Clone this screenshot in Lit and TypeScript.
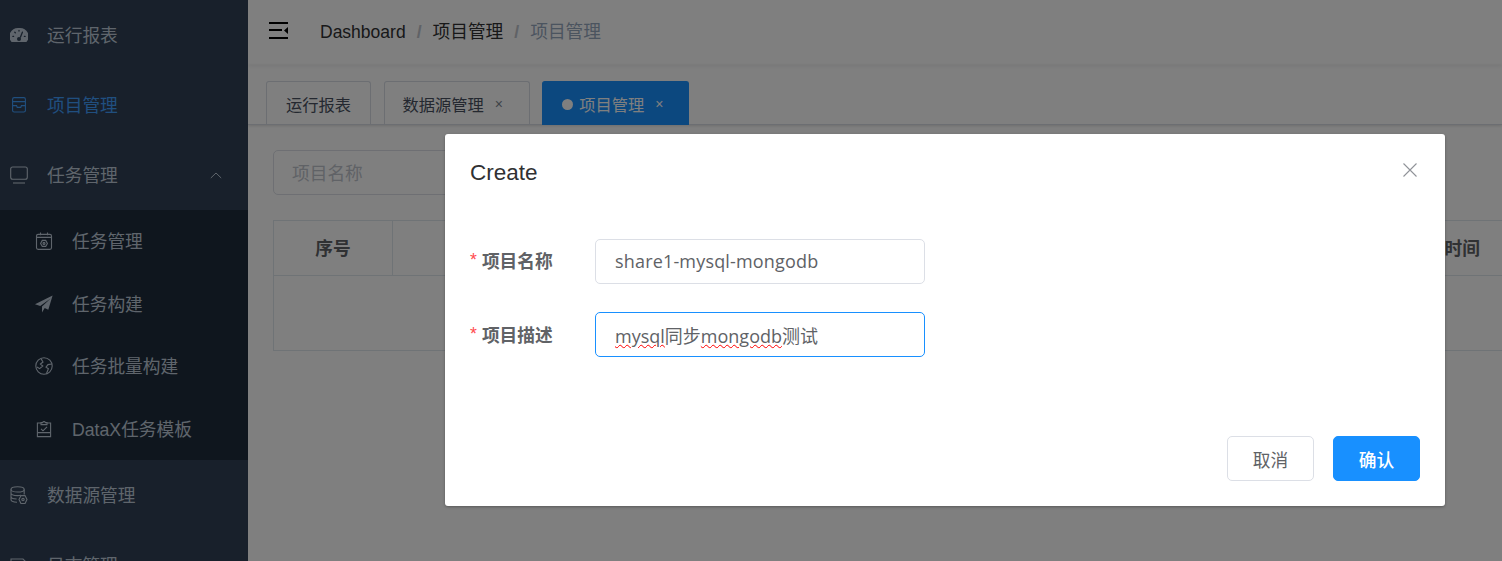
import { LitElement, html, css, svg } from "lit";
import { customElement } from "lit/decorators.js";

const icons: Record<string, unknown> = {
  gauge: svg`<path fill="currentColor" stroke="none" d="M1.600 16 A9 8.400 0 0 1 9 2 A9 8.400 0 0 1 16.400 16 Z"/><g stroke="#304156" stroke-width="1.300" stroke-linecap="round"><path d="M9 4.400v.6M4.800 6.200l.5.5M2.900 10.400h.7M14.400 10.400h.7M12.400 6.200l-2 5"/></g><circle cx="9" cy="13" r="2" fill="#304156" stroke="none"/>`,
  inbox: svg`<rect x="2.600" y="1.600" width="12.800" height="14.400" rx="1.600"/><path d="M2.600 5.600h12.800M2.600 9.600h4l.6 1.800h3.600l.6-1.800h4"/>`,
  monitor: svg`<rect x=".7" y="1" width="16.600" height="12.200" rx="2"/><path d="M3 17h12"/>`,
  calendar: svg`<rect x="1.500" y="2.400" width="15" height="15" rx="1.600"/><path d="M1.500 5.400h15M5.500 .5v2.800M12.500 .5v2.800"/><circle cx="9" cy="11.400" r="1"/><path d="M7.300 8.400h3.400l1.700 3-1.700 3H7.300l-1.700-3z"/>`,
  plane: svg`<path fill="currentColor" stroke="none" d="M17.600 .6 0 9.200l5.200 1.700L15.600 3.400 7 11.600v5.800l2.700-4.400 3.600 1.700z"/>`,
  globe: svg`<circle cx="9" cy="9" r="8.200"/><path d="M6 1.600 8 5 5.400 7l2.400 2-3.200 2.600-2.600-1.600M16.800 7l-3.800.6-2 2.600 2.400 1.600-2 5"/>`,
  clip: svg`<path d="M6 3H2.400v13.600h13.200V3H12"/><path d="M6 4.600V2.600h1.600a1.500 1.500 0 0 1 2.800 0H12v2zM2.400 12.600h13.200M6 8.800l2 2 4-4"/>`,
  db: svg`<ellipse cx="7.600" cy="3.400" rx="6.600" ry="2.600"/><path d="M1 3.400v10.200c0 1.500 2.600 2.600 6 2.600M1 7c0 1.500 2.800 2.600 6.600 2.600 1.200 0 2.400-.1 3.400-.4M14.200 3.400v5M1 10.400c0 1.400 2.400 2.400 5.600 2.600"/><circle cx="13" cy="13.600" r="1.200"/><path d="M11 9.600h4l2 4-2 4h-4l-2-4z"/>`,
  log: svg`<path d="M1 3h12l3 3v12H1zM4 7h7M4 11h9"/>`,
};

const icon = (n: string) =>
  html`<svg class="ic" viewBox="0 0 18 18" fill="none" stroke="currentColor" stroke-width="1.100">${icons[n]}</svg>`;

@customElement("app-root")
export class AppRoot extends LitElement {
  static styles = css`
    :host {
      display: block;
      width: 1502px;
      height: 561px;
      position: relative;
      overflow: hidden;
      background: #fff;
      font-family: "Liberation Sans", "Noto Sans CJK SC", sans-serif;
      font-size: 17.7px;
      color: #606266;
    }
    .app { display: flex; height: 561px; }
    .side {
      width: 248px;
      flex: none;
      background: #304156;
      color: #bfcbd9;
      overflow: hidden;
    }
    .item {
      height: 70px;
      display: flex;
      align-items: center;
      gap: 19px;
      padding-left: 10px;
      padding-right: 26px;
      flex: none;
    }
    .item span { padding-bottom: 2px; }
    .item.active { color: #409eff; }
    .item .chev { margin-left: auto; width: 12px; height: 7px; }
    .ic { width: 18px; height: 18px; flex: none; }
    .sub { background: #1f2d3d; display: grid; grid-auto-rows: 62.5px; }
    .sub .item { height: auto; padding-left: 35px; }
    .main { flex: 1; min-width: 0; display: flex; flex-direction: column; overflow: hidden; }
    .nav {
      height: 65px;
      flex: none;
      box-sizing: border-box;
      display: flex;
      align-items: center;
      padding: 0 0 4px 20px;
      gap: 30px;
      box-shadow: 0 1px 4px rgba(0, 21, 41, 0.08);
    }
    .burger { width: 22px; height: 18px; flex: none; }
    .crumbs { display: flex; align-items: baseline; gap: 11px; color: #303133; margin-top: -2px; }
    .crumbs .latin { font-size: 17.5px; }
    .crumbs .sep { color: #c0c4cc; font-weight: 700; }
    .crumbs .last { color: #97a8be; }
    .tags {
      height: 60px;
      flex: none;
      box-sizing: border-box;
      display: flex;
      align-items: flex-end;
      gap: 12.5px;
      padding-left: 18px;
      border-bottom: 1px solid #d8dce5;
      box-shadow: 0 1px 3px rgba(0, 0, 0, 0.12), 0 0 3px rgba(0, 0, 0, 0.04);
    }
    .tag {
      height: 44px;
      box-sizing: border-box;
      display: flex;
      align-items: center;
      padding: 1px 19px 0;
      border: 1px solid #d8dce5;
      border-bottom: 0;
      border-radius: 3px 3px 0 0;
      font-size: 16.25px;
      color: #495060;
      margin-bottom: -1px;
    }
    .tag.closable { padding: 1px 25px 0 18px; }
    .tag.on { background: #1890ff; border-color: #1890ff; color: #fff; padding: 1px 24px 0 19px; }
    .x { width: 10px; margin-left: 10px; text-align: center; font-size: 14px; line-height: 1; color: #7d8590; }
    .tag.on .x { color: #fff; }
    .dot { width: 11px; height: 11px; margin-right: 6px; border-radius: 50%; background: #fff; flex: none; }
    .content { padding: 25px 0 0 25px; display: flex; flex-direction: column; gap: 25px; }
    .filter {
      width: 250px;
      height: 45px;
      box-sizing: border-box;
      border: 1px solid #dcdfe6;
      border-radius: 5px;
      display: flex;
      align-items: center;
      padding: 0 0 2px 18px;
      color: #c0c4cc;
    }
    .table {
      width: 1273px;
      display: grid;
      grid-template-columns: 119px 1fr 200px;
      grid-template-rows: 55px 75px;
      border: 1px solid #dfe6ec;
      box-sizing: border-box;
      height: 131px;
    }
    .th {
      display: flex;
      align-items: center;
      justify-content: center;
      padding-bottom: 2px;
      box-sizing: border-box;
      font-weight: 700;
      color: #606266;
      border-bottom: 1px solid #dfe6ec;
      border-right: 1px solid #dfe6ec;
    }
    .overlay { position: absolute; inset: 0; background: rgba(0, 0, 0, 0.5); }
    .modal {
      position: absolute;
      left: 445px;
      top: 134px;
      width: 1000px;
      height: 372px;
      background: #fff;
      border-radius: 3px;
      box-shadow: 0 1px 3px rgba(0, 0, 0, 0.3);
      display: flex;
      flex-direction: column;
    }
    .head {
      height: 76px;
      flex: none;
      box-sizing: border-box;
      display: flex;
      align-items: center;
      justify-content: space-between;
      padding: 2px 27px 0 25px;
      font-size: 22.5px;
      color: #303133;
    }
    .close { width: 16px; height: 16px; color: #909399; margin-top: -6px; }
    .form { padding-top: 29px; display: grid; gap: 28px; }
    .row { display: flex; align-items: center; padding-left: 25px; }
    .label { width: 125px; flex: none; font-weight: 700; display: flex; gap: 5px; margin-top: -4px; }
    .row + .row .label { margin-top: -2px; }
    .star { color: #ff4d4f; font-weight: 400; margin-top: 3px; }
    .input {
      width: 330px;
      height: 45px;
      box-sizing: border-box;
      border: 1px solid #dcdfe6;
      border-radius: 5px;
      display: flex;
      align-items: center;
      padding: 0 0 2px 19px;
      white-space: pre;
      font-family: "Open Sans", "Noto Sans CJK SC", sans-serif;
      font-size: 18px;
    }
    .input.wide { letter-spacing: 0.17px; }
    .input.focus { border-color: #1890ff; padding-bottom: 0; }
    .spell { text-decoration: underline wavy #f00 1px; text-underline-offset: 1px; }
    .foot { margin-top: auto; padding: 0 25px 25px 0; display: flex; justify-content: flex-end; gap: 19px; }
    .btn {
      width: 87px;
      height: 45px;
      box-sizing: border-box;
      border: 1px solid #dcdfe6;
      border-radius: 5px;
      display: flex;
      align-items: center;
      justify-content: center;
    }
    .btn.primary { background: #1890ff; border-color: #1890ff; color: #fff; font-weight: 500; }
  `;

  private item(i: string, t: string, active = false) {
    return html`<div class="item ${active ? "active" : ""}">${icon(i)}<span>${t}</span></div>`;
  }

  render() {
    return html`
      <div class="app">
        <aside class="side">
          ${this.item("gauge", "运行报表")}
          ${this.item("inbox", "项目管理", true)}
          <div class="item">
            ${icon("monitor")}<span>任务管理</span>
            <svg class="chev" viewBox="0 0 12 7" fill="none" stroke="currentColor" stroke-width="1"><path d="M.8 6 6 1l5.200 5"/></svg>
          </div>
          <div class="sub">
            ${this.item("calendar", "任务管理")}
            ${this.item("plane", "任务构建")}
            ${this.item("globe", "任务批量构建")}
            ${this.item("clip", "DataX任务模板")}
          </div>
          ${this.item("db", "数据源管理")}
          ${this.item("log", "日志管理")}
        </aside>
        <main class="main">
          <header class="nav">
            <svg class="burger" viewBox="0 0 22 18"><path fill="#000" d="M1 0h19v2H1zM1 7h13v2H1zM1 15h19v2H1zM20 5v7l-4-3.500z"/></svg>
            <div class="crumbs">
              <span class="latin">Dashboard</span><span class="sep">/</span><span>项目管理</span><span class="sep">/</span><span class="last">项目管理</span>
            </div>
          </header>
          <nav class="tags">
            <div class="tag">运行报表</div>
            <div class="tag closable">数据源管理<span class="x">×</span></div>
            <div class="tag closable on"><span class="dot"></span>项目管理<span class="x">×</span></div>
          </nav>
          <section class="content">
            <div class="filter">项目名称</div>
            <div class="table">
              <div class="th">序号</div>
              <div class="th"></div>
              <div class="th">创建时间</div>
            </div>
          </section>
        </main>
      </div>
      <div class="overlay"></div>
      <div class="modal">
        <div class="head">
          <span>Create</span>
          <svg class="close" viewBox="0 0 16 16" fill="none" stroke="currentColor" stroke-width="1.100"><path d="M1.500 1.500l13 13M14.500 1.500l-13 13"/></svg>
        </div>
        <div class="form">
          <div class="row">
            <div class="label"><span class="star">*</span>项目名称</div>
            <div class="input wide">share1-mysql-mongodb</div>
          </div>
          <div class="row">
            <div class="label"><span class="star">*</span>项目描述</div>
            <div class="input focus"><span><span class="spell">mysql</span>同步<span class="spell">mongodb</span>测试</span></div>
          </div>
        </div>
        <div class="foot">
          <div class="btn">取消</div>
          <div class="btn primary">确认</div>
        </div>
      </div>
    `;
  }
}
